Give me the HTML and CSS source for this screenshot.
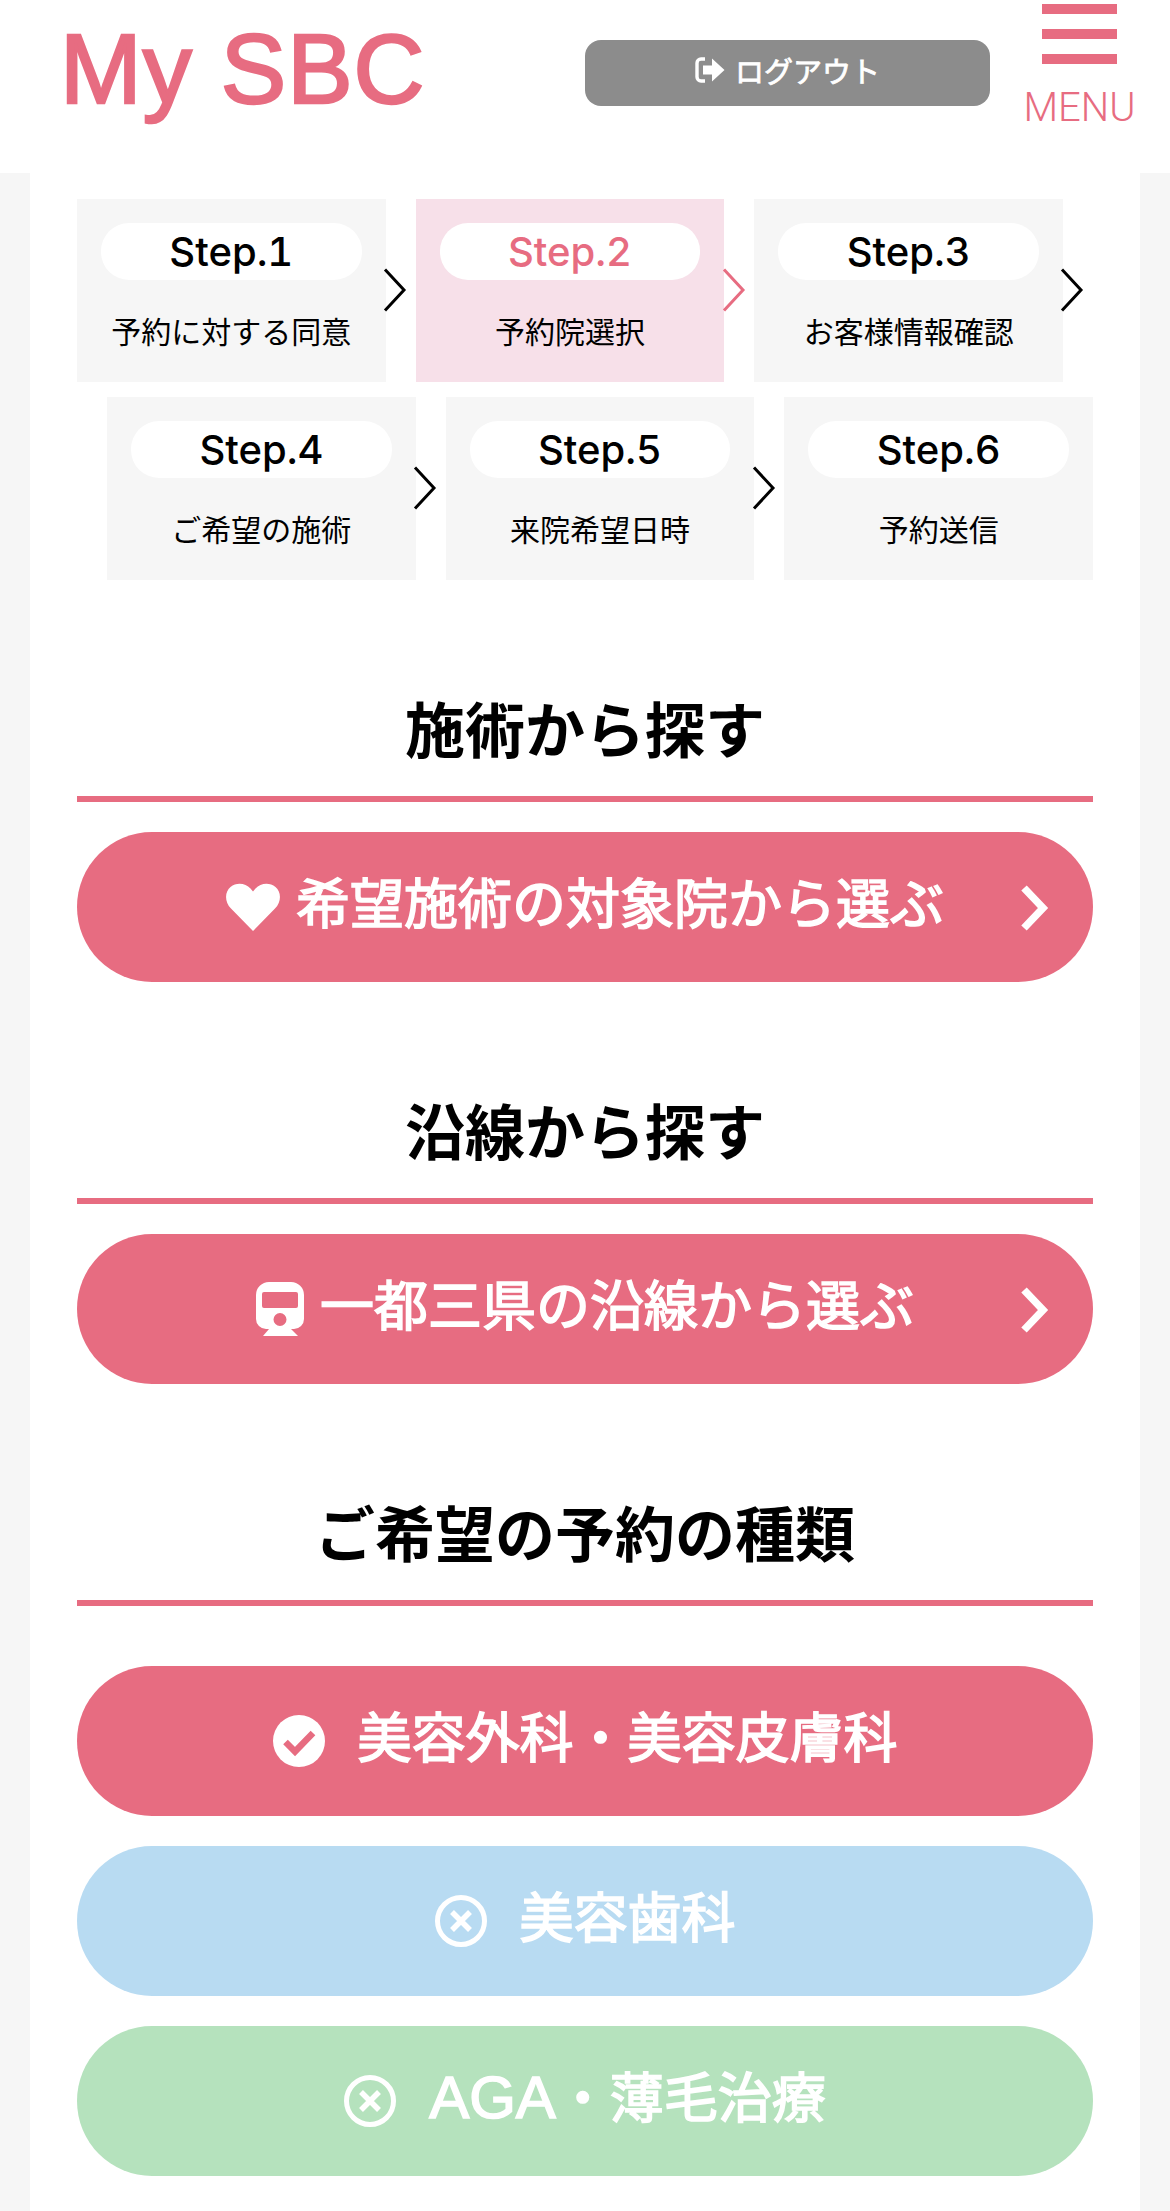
FILE: index.html
```html
<!DOCTYPE html>
<html lang="ja">
<head>
    <meta charset="UTF-8">
    <meta name="viewport" content="width=device-width, initial-scale=1.0">
    <title>My SBC</title>
    <link rel="stylesheet" href="styles.css">
</head>
<body>
    <header class="header">
        <div class="logo">My SBC</div>
        <a class="logout">
            <svg class="logout-icon" viewBox="0 0 30 26"><path d="M10 2H6a4 4 0 0 0-4 4v14a4 4 0 0 0 4 4h4" fill="none" stroke="#fff" stroke-width="3.4"/><path d="M8 8.500h9V1.500L29.500 13 17 24.500V17.500H8z" fill="#fff"/></svg>
            <span>ログアウト</span>
        </a>
        <div class="menu">
            <div class="menu-bars"><span></span><span></span><span></span></div>
            <div class="menu-label">MENU</div>
        </div>
    </header>
    <main class="container">
        <div class="steps">
            <div class="step-row">
                <div class="step">
                    <div class="step-num">Step.1</div>
                    <div class="step-name">予約に対する同意</div>
                    <svg class="step-arrow" viewBox="0 0 24 44"><path d="M2 1.500 21 22 2 42.500"/></svg>
                </div>
                <div class="step step-active">
                    <div class="step-num">Step.2</div>
                    <div class="step-name">予約院選択</div>
                    <svg class="step-arrow" viewBox="0 0 24 44"><path d="M2 1.500 21 22 2 42.500"/></svg>
                </div>
                <div class="step">
                    <div class="step-num">Step.3</div>
                    <div class="step-name">お客様情報確認</div>
                    <svg class="step-arrow" viewBox="0 0 24 44"><path d="M2 1.500 21 22 2 42.500"/></svg>
                </div>
            </div>
            <div class="step-row step-row-right">
                <div class="step">
                    <div class="step-num">Step.4</div>
                    <div class="step-name">ご希望の施術</div>
                    <svg class="step-arrow" viewBox="0 0 24 44"><path d="M2 1.500 21 22 2 42.500"/></svg>
                </div>
                <div class="step">
                    <div class="step-num">Step.5</div>
                    <div class="step-name">来院希望日時</div>
                    <svg class="step-arrow" viewBox="0 0 24 44"><path d="M2 1.500 21 22 2 42.500"/></svg>
                </div>
                <div class="step">
                    <div class="step-num">Step.6</div>
                    <div class="step-name">予約送信</div>
                </div>
            </div>
        </div>

        <section class="section">
            <h2>施術から探す</h2>
            <a class="btn btn-red">
                <svg class="icon-heart" viewBox="0 0 54 48"><path d="M27 48 5 25.500C-1.500 19-1.500 9 4.500 4c6-5 15-4 20 1.500L27 8.500l2.500-3C34.500 0 43.500-1 49.500 4c6 5 6 15-.500 21.500z" fill="#fff"/></svg>
                <span class="btn-text">希望施術の対象院から選ぶ</span>
                <svg class="btn-arrow" viewBox="0 0 30 48"><path d="M5 4 24 24 5 44" fill="none" stroke="#fff" stroke-width="7.500"/></svg>
            </a>
        </section>

        <section class="section">
            <h2>沿線から探す</h2>
            <a class="btn btn-red">
                <svg class="icon-train" viewBox="0 0 48 54"><path fill-rule="evenodd" d="M13 0h22a13 13 0 0 1 13 13v24a10 10 0 0 1-10 10H10A10 10 0 0 1 0 37V13A13 13 0 0 1 13 0zM8 10a2 2 0 0 0-2 2v12a2 2 0 0 0 2 2h32a2 2 0 0 0 2-2V12a2 2 0 0 0-2-2zM24 31a6.500 6.500 0 1 0 0 13 6.500 6.500 0 0 0 0-13z" fill="#fff"/><path d="M13 47h22l7 7H7z" fill="#fff"/></svg>
                <span class="btn-text">一都三県の沿線から選ぶ</span>
                <svg class="btn-arrow" viewBox="0 0 30 48"><path d="M5 4 24 24 5 44" fill="none" stroke="#fff" stroke-width="7.500"/></svg>
            </a>
        </section>

        <section class="section">
            <h2>ご希望の予約の種類</h2>
            <div class="types">
                <a class="btn btn-red btn-type">
                    <svg class="icon-status" viewBox="0 0 52 52"><circle cx="26" cy="26" r="26" fill="#fff"/><path d="M12.500 27 22 36.500 40 18" fill="none" stroke="#e76c81" stroke-width="6.500"/></svg>
                    <span class="btn-text">美容外科・美容皮膚科</span>
                </a>
                <a class="btn btn-blue btn-type">
                    <svg class="icon-status" viewBox="0 0 52 52"><circle cx="26" cy="26" r="23.500" fill="none" stroke="#fff" stroke-width="5"/><path d="M17 17 35 35M35 17 17 35" fill="none" stroke="#fff" stroke-width="5.500"/></svg>
                    <span class="btn-text">美容歯科</span>
                </a>
                <a class="btn btn-green btn-type">
                    <svg class="icon-status" viewBox="0 0 52 52"><circle cx="26" cy="26" r="23.500" fill="none" stroke="#fff" stroke-width="5"/><path d="M17 17 35 35M35 17 17 35" fill="none" stroke="#fff" stroke-width="5.500"/></svg>
                    <span class="btn-text"><span class="btn-latin">AGA</span>・薄毛治療</span>
                </a>
            </div>
        </section>
    </main>
</body>
</html>
```

FILE: styles.css
```css
* {
    box-sizing: border-box;
}
html, body {
    height: 100%;
}
body {
    margin: 0;
    background-color: #f6f6f6;
    font-family: "Liberation Sans", "Noto Sans CJK JP", sans-serif;
    color: #000;
    display: flex;
    flex-direction: column;
    min-height: 2211px;
}

/* header */
.header {
    height: 173px;
    background-color: #fff;
    display: flex;
    align-items: flex-start;
    padding-left: 60px;
}
.logo {
    width: 525px;
    margin-top: 17px;
    font-size: 98px;
    line-height: 104px;
    color: #e76c81;
    -webkit-text-stroke: 2.5px #e76c81;
    letter-spacing: 1px;
    white-space: nowrap;
}
.logout {
    width: 405px;
    height: 66px;
    margin-top: 40px;
    border-radius: 16px;
    background-color: #8c8c8c;
    color: #fff;
    font-family: "Noto Sans CJK JP", sans-serif;
    font-size: 29px;
    -webkit-text-stroke: 0.8px #fff;
    display: flex;
    justify-content: center;
    align-items: center;
    gap: 10px;
    padding-bottom: 6px;
}
.logout-icon {
    width: 30px;
    height: 26px;
}
.menu {
    margin-left: 34px;
    width: 111px;
    display: flex;
    flex-direction: column;
    align-items: center;
}
.menu-bars {
    margin-top: 4px;
    width: 75px;
    display: flex;
    flex-direction: column;
    gap: 15px;
}
.menu-bars span {
    height: 10px;
    background-color: #e76c81;
}
.menu-label {
    margin-top: 22px;
    font-family: "Roboto", sans-serif;
    font-weight: 300;
    font-size: 40px;
    line-height: 44px;
    color: #e76c81;
    white-space: nowrap;
}

/* main */
.container {
    flex: 1;
    margin: 0 30px;
    padding: 26px 47px 0;
    background-color: #fff;
}

/* steps */
.steps {
    display: flex;
    flex-direction: column;
    gap: 15px;
}
.step-row {
    display: flex;
    gap: 30px;
}
.step-row-right {
    justify-content: flex-end;
}
.step {
    position: relative;
    width: 308.67px;
    height: 183px;
    padding: 24px 24px 0;
    background-color: #f6f6f6;
    text-align: center;
}
.step-num {
    height: 57px;
    border-radius: 28px;
    background-color: #fff;
    font-size: 40px;
    line-height: 57px;
    font-family: "Inter", "Liberation Sans", sans-serif;
    font-weight: 500;
    font-variant-numeric: tabular-nums;
}
.step-name {
    margin-top: 28px;
    font-family: "Noto Sans CJK JP", sans-serif;
    font-size: 30px;
    line-height: 44px;
    white-space: nowrap;
}
.step-arrow {
    position: absolute;
    top: 69px;
    left: 306px;
    width: 24px;
    height: 44px;
    fill: none;
    stroke: #000;
    stroke-width: 3;
}
.step-active {
    background-color: #f7e0e9;
}
.step-active .step-num {
    color: #e76c81;
}
.step-active .step-arrow {
    stroke: #e76c81;
}

/* sections */
.section {
    margin-top: 117px;
}
.section h2 {
    margin: 0 0 30px;
    padding-bottom: 39px;
    border-bottom: 6px solid #e76c81;
    font-family: "Noto Sans CJK JP", sans-serif;
    font-size: 60px;
    line-height: 60px;
    font-weight: 700;
    text-align: center;
}
.section:last-child h2 {
    margin-bottom: 60px;
}
.btn {
    position: relative;
    height: 150px;
    border-radius: 75px;
    color: #fff;
    font-family: "Noto Sans CJK JP", sans-serif;
    font-size: 54px;
    display: flex;
    justify-content: center;
    align-items: center;
    gap: 16px;
    white-space: nowrap;
}
.btn-text {
    padding-bottom: 14px;
    -webkit-text-stroke: 1.6px #fff;
}
.btn-latin {
    font-family: "Liberation Sans", sans-serif;
    font-size: 60px;
}
.btn-red {
    background-color: #e76c81;
}
.btn-blue {
    background-color: #b8dbf2;
}
.btn-green {
    background-color: #b5e2bd;
}
.btn-arrow {
    position: absolute;
    right: 44px;
    top: 52px;
    width: 30px;
    height: 48px;
}
.icon-heart {
    width: 54px;
    height: 48px;
}
.icon-train {
    width: 48px;
    height: 54px;
}
.types {
    display: flex;
    flex-direction: column;
    gap: 30px;
}
.btn-type {
    gap: 33px;
}
.icon-status {
    width: 52px;
    height: 52px;
}
```
